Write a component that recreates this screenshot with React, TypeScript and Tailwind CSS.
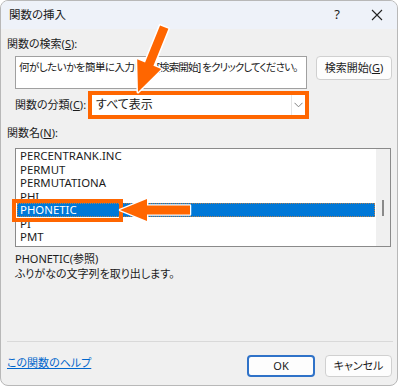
import React from "react";

const items = [
  "PERCENTRANK.INC",
  "PERMUT",
  "PERMUTATIONA",
  "PHI",
  "PHONETIC",
  "PI",
  "PMT",
];

export default function App() {
  return (
    <div className="relative w-[400px] h-[387px] bg-white text-[11px] text-[#1b1b1b] [font-family:'Noto_Sans','Noto_Sans_CJK_JP',sans-serif] [font-feature-settings:'palt']">
      <div className="w-[398px] h-[386px] rounded-[8px] border border-[#b8b8b8] bg-[#f0f0f0] overflow-hidden flex flex-col">
        {/* title bar */}
        <div className="h-[28px] bg-[#eef2f9] flex items-center shrink-0">
          <span className="pl-[8px] text-[11.5px]">関数の挿入</span>
          <div className="ml-auto flex h-full">
            <div className="w-[40px] h-full flex items-center justify-center text-[13px]">?</div>
            <div className="w-[40px] h-full flex items-center justify-center">
              <svg width="12" height="12" viewBox="0 0 12 12">
                <path d="M1 1 L11 11 M11 1 L1 11" stroke="#222" strokeWidth="1.1" fill="none" />
              </svg>
            </div>
          </div>
        </div>

        {/* body */}
        <div className="flex-1 flex flex-col pl-[6px] pr-[5px]">
          <div className="mt-[8px] h-[14px] leading-[14px]">
            関数の検索(<span className="underline">S</span>):
          </div>

          <div className="mt-[5px] pl-[8px] flex items-start">
            <div className="w-[292px] h-[33px] border border-[#a0a0a0] bg-white px-[3px] pt-[3px] leading-[14px] whitespace-nowrap overflow-hidden text-[10.5px] tracking-[-0.5px]">
              何がしたいかを簡単に入力<span className="text-[10px] tracking-[0px]">して、</span><span className="tracking-[-0.85px]">[検索開始] をクリックしてください。</span>
            </div>
            <div className="ml-[9px] w-[76px] h-[24px] rounded-[4px] border border-[#d0d0d0] bg-[#fdfdfd] flex items-center justify-center whitespace-nowrap">
              検索開始(<span className="underline">G</span>)
            </div>
          </div>

          <div className="mt-[2px] pl-[8px] flex items-center">
            <div className="w-[73px] whitespace-nowrap">
              関数の分類(<span className="underline">C</span>):
            </div>
            <div className="w-[221px] h-[28px] border-4 border-[#ff6600] bg-white flex items-center">
              <span className="pl-[4px] flex-1 text-[12px]">すべて表示</span>
              <div className="w-[14px] h-full border-l border-[#e4e4e4] flex items-center justify-center">
                <svg width="9" height="6" viewBox="0 0 9 6">
                  <path d="M0.5 0.8 L4.5 4.8 L8.5 0.8" stroke="#808080" strokeWidth="1" fill="none" />
                </svg>
              </div>
            </div>
          </div>

          <div className="mt-[7px] h-[14px] leading-[14px]">
            関数名(<span className="underline">N</span>):
          </div>

          <div className="mt-[8px] ml-[8px] w-[376px] h-[99px] border border-[#8a8a8a] bg-white flex text-[11.4px]">
            <div className="flex-1 pl-[1px] pr-[1px]">
              {items.map((it) => (
                <div
                  key={it}
                  className={
                    it === "PHONETIC"
                      ? "h-[13.5px] leading-[12px] pl-[2px] bg-[#0078d7] text-white border border-dotted border-[#b08050]"
                      : "h-[13.5px] leading-[13.5px] pl-[3px]"
                  }
                >
                  {it}
                </div>
              ))}
            </div>
            <div className="w-[14px] bg-[#f0f0f0] relative">
              <div className="absolute left-[6px] top-[51px] w-[2px] h-[16px] bg-[#8a8a8a]" />
            </div>
          </div>

          <div className="mt-[4px] ml-[8px] leading-[15px]">
            <div>PHONETIC(参照)</div>
            <div>ふりがなの文字列を取り出します。</div>
          </div>

          <div className="mt-auto h-px bg-[#d9d9d9] -mr-[1px]" />

          <div className="mt-[13px] mb-[8px] flex items-start">
            <span className="mt-[1px] text-[#0066cc] underline leading-[14px]">この関数のヘルプ</span>
            <div className="ml-auto flex gap-[10px]">
              <div className="w-[68px] h-[22px] rounded-[4px] border-2 border-[#2f72c8] bg-[#fdfdfd] flex items-center justify-center">
                OK
              </div>
              <div className="w-[67px] h-[22px] rounded-[4px] border border-[#d0d0d0] bg-[#fdfdfd] flex items-center justify-center">
                キャンセル
              </div>
            </div>
          </div>
        </div>
      </div>

      {/* annotation overlay */}
      <svg className="absolute left-0 top-0 pointer-events-none" width="400" height="387" viewBox="0 0 400 387">
        <rect x="14" y="201" width="107" height="19" fill="none" stroke="#ff6600" strokeWidth="4" />
        <polygon
          points="120,210 147,199 147,205.5 190,205.5 190,214.5 147,214.5 147,221"
          fill="#ff6600"
          stroke="#ffffff"
          strokeWidth="2.5"
          strokeLinejoin="round"
          style={{ paintOrder: "stroke" }}
        />
        <g transform="translate(138,92) rotate(22)">
          <polygon
            points="0,0 -13,-30 -4.5,-30 -4.5,-70 4.5,-70 4.5,-30 13,-30"
            fill="#ff6600"
            stroke="#ffffff"
            strokeWidth="3"
            strokeLinejoin="round"
            style={{ paintOrder: "stroke" }}
          />
        </g>
      </svg>
    </div>
  );
}
